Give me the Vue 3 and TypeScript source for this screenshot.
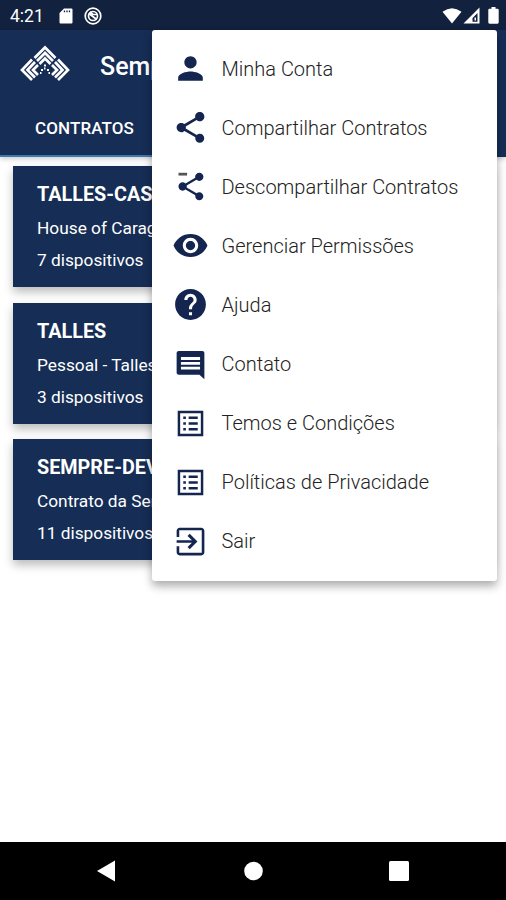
<script setup lang="ts">
interface Contract { name: string; description: string; devices: string }
interface MenuItem { label: string; path: string; kind?: string }

const contracts: Contract[] = [
  { name: 'TALLES-CASA', description: 'House of Caragua', devices: '7 dispositivos' },
  { name: 'TALLES', description: 'Pessoal - Talles', devices: '3 dispositivos' },
  { name: 'SEMPRE-DEV', description: 'Contrato da Sempre', devices: '11 dispositivos' },
]

const share = 'M18 16.08c-.76 0-1.44.3-1.96.77L8.91 12.7c.05-.23.09-.46.09-.7s-.04-.47-.09-.7l7.05-4.11c.54.5 1.25.81 2.04.81 1.66 0 3-1.34 3-3s-1.34-3-3-3-3 1.34-3 3c0 .24.04.47.09.7L8.04 9.81C7.5 9.31 6.79 9 6 9c-1.66 0-3 1.34-3 3s1.34 3 3 3c.79 0 1.5-.31 2.04-.81l7.12 4.16c-.05.21-.08.43-.08.65 0 1.61 1.31 2.92 2.92 2.92s2.92-1.31 2.92-2.92-1.31-2.92-2.92-2.92z'
const list = 'M3.7 3.7h16.6v16.6H3.7zM5.3 5.3v13.4h13.4V5.3zM7.3 7.5H9v1.600H7.3zM7.3 11.2H9v1.600H7.3zM7.300 14.900H9v1.600H7.300zM10.800 7.500h5.900v1.600h-5.900zM10.800 11.200h5.900v1.600h-5.900zM10.800 14.900h5.900v1.600h-5.900z'

const menu: MenuItem[] = [
  { label: 'Minha Conta', path: 'M12 12c2.21 0 4-1.79 4-4s-1.79-4-4-4-4 1.79-4 4 1.79 4 4 4zm0 2c-2.67 0-8 1.34-8 4v2h16v-2c0-2.66-5.33-4-8-4z' },
  { label: 'Compartilhar Contratos', path: share },
  { label: 'Descompartilhar Contratos', path: share, kind: 'unshare' },
  { label: 'Gerenciar Permissões', path: 'M12 4.5C7 4.5 2.73 7.61 1 12c1.73 4.39 6 7.5 11 7.5s9.27-3.11 11-7.5c-1.73-4.39-6-7.5-11-7.5zM12 17c-2.76 0-5-2.24-5-5s2.24-5 5-5 5 2.24 5 5-2.24 5-5 5zm0-8c-1.66 0-3 1.34-3 3s1.34 3 3 3 3-1.34 3-3-1.34-3-3-3z' },
  { label: 'Ajuda', path: 'M12 2C6.48 2 2 6.48 2 12s4.48 10 10 10 10-4.48 10-10S17.52 2 12 2zm1 17h-2v-2h2v2zm2.07-7.75l-.9.92C13.45 12.9 13 13.5 13 15h-2v-.5c0-1.1.45-2.1 1.17-2.83l1.24-1.26c.37-.36.59-.86.59-1.41 0-1.1-.9-2-2-2s-2 .9-2 2H8c0-2.21 1.79-4 4-4s4 1.79 4 4c0 .88-.36 1.68-.93 2.25z' },
  { label: 'Contato', path: 'M21 4.6c0-.9-.6-1.400-1.400-1.400H4.400C3.600 3.200 3 3.700 3 4.600v12.600c0 .9.6 1.400 1.400 1.400h13.400L21 21.500zM18.200 15.300H5.800v-1.900h12.400zM18.200 12.200H5.800v-1.900h12.400zM18.200 9.100H5.800V7.200h12.400z' },
  { label: 'Temos e Condições', path: list },
  { label: 'Políticas de Privacidade', path: list },
  { label: 'Sair', path: 'M10.09 15.59L11.5 17l5-5-5-5-1.41 1.41L12.9 11.2H3v1.600h9.900l-2.810 2.790zM19 3H5c-1.110 0-2 .9-2 2v4h1.700V4.700h14.600v14.600H4.700V15H3v4c0 1.100.890 2 2 2h14c1.100 0 2-.9 2-2V5c0-1.100-.9-2-2-2z' },
]
</script>

<template>
  <div class="screen">
    <div class="status">
      <span class="time">4:21</span>
      <svg class="sd" viewBox="0 0 14 16"><path fill-rule="evenodd" d="M5 .5h7.500Q13.500.5 13.500 1.500v13q0 1-1 1h-11q-1 0-1-1V5zM4.800 2.500v1.700h1.300V2.500zM7.300 2.500v1.700h1.300V2.500zM9.800 2.500v1.700h1.300V2.500z" /></svg>
      <svg class="sync" viewBox="0 0 18 18"><circle cx="9" cy="9" r="7.800" /><circle cx="9" cy="9" r="4.500" /><path d="M4.800 6.500l8 6M6 5l3 2.500h4" /></svg>
      <span class="grow"></span>
      <svg class="wifi" viewBox="0 0 20 16"><path d="M.5 3.800Q10-3.200 19.500 3.800L10 15.500z" /></svg>
      <svg class="signal" viewBox="0 0 17 17"><path fill-rule="evenodd" d="M16.500.5v16H.5zM14.500 6l-5 5v3.800h5z" /><path d="M11.500 10.500h1.500v3h-1.500z" /></svg>
      <svg class="battery" viewBox="0 0 11 17"><path d="M3.500 0h4v1.700h2q1.200 0 1.200 1.200v12.400q0 1.400-1.200 1.400h-8Q.3 16.700.3 15.300V2.900q0-1.200 1.200-1.200h2z" /></svg>
    </div>
    <header class="header">
      <div class="brand">
        <svg class="logo" viewBox="0 0 50 38">
          <path d="M14.500 13L25 2.500 35.500 13M17 16l8-8 8 8M19.500 19l5.500-5.500 5.500 5.500" />
          <path d="M12 14.500L2 25l10 10M15 17l-7.500 8 7.500 7.500M18 20l-5 5 5 5" />
          <path d="M38 14.500L48 25 38 35M35 17l7.500 8-7.500 7.500M32 20l5 5-5 5" />
          <path class="dots" d="M24 20.500h2M21 25h2M27 25h2M24 23.500h1.500M20 28h1.500M28.500 28H30" />
        </svg>
        <h1>Sempre</h1>
      </div>
      <nav class="tabs"><div class="tab active">CONTRATOS</div><div class="tab"></div></nav>
    </header>
    <main class="contracts">
      <article v-for="c in contracts" :key="c.name" class="card">
        <h2>{{ c.name }}</h2>
        <p>{{ c.description }}</p>
        <p>{{ c.devices }}</p>
      </article>
    </main>
    <footer class="navbar">
      <svg viewBox="0 0 20 22"><path d="M19 .5v21L1 11z" /></svg>
      <svg viewBox="0 0 20 22"><circle cx="10.500" cy="11" r="9.300" /></svg>
      <svg viewBox="0 0 20 22"><rect x="0" y="1" width="20" height="20" rx="1.500" /></svg>
    </footer>
    <div class="menu">
      <div v-for="m in menu" :key="m.label" class="item">
        <svg v-if="m.kind === 'unshare'" class="icon" viewBox="0 0 24 24">
          <path transform="translate(1.500 1.200) scale(.9)" :d="m.path" />
          <path class="minus" d="M4.200 3.100h5.600v1.800H4.200z" />
        </svg>
        <svg v-else class="icon" viewBox="0 0 24 24"><path fill-rule="evenodd" :d="m.path" /></svg>
        <span>{{ m.label }}</span>
      </div>
    </div>
  </div>
</template>

<style>
body { margin: 0; overflow: hidden; }
</style>
<style scoped>
.screen { position: relative; width: 506px; height: 900px; display: flex; flex-direction: column; overflow: hidden; background: #fff; font-family: Roboto, sans-serif; color: #fff; }
.status { height: 30px; box-sizing: border-box; padding: 1px 7px 0 10px; display: flex; align-items: center; background: #12213e; }
.status svg, .navbar svg { fill: #fff; }
.time { width: 49px; font-size: 17.500px; }
.sd { width: 14px; height: 16px; }
.status .sync { width: 18px; height: 18px; margin-left: 11px; fill: none; stroke: #fff; stroke-width: 1.700; }
.grow { flex: 1; }
.wifi { width: 20px; height: 16px; }
.signal { width: 17px; height: 17px; margin-left: 1px; }
.battery { width: 11px; height: 17px; margin-left: 8px; }
.header { height: 127px; display: flex; flex-direction: column; background: #162d55; box-shadow: 0 2px 5px #0003; z-index: 1; }
.brand { height: 72px; display: flex; align-items: center; padding-left: 20px; gap: 30px; }
.logo { width: 50px; height: 38px; margin-top: -4px; fill: none; stroke: #fff; stroke-width: 2.700; }
.logo .dots { stroke-width: 1.800; }
h1 { margin: 0; font-size: 25px; font-weight: 500; }
.tabs { flex: 1; display: flex; }
.tab { flex: 1; box-sizing: border-box; padding: 16px 0 0 35px; font-size: 17px; line-height: 20px; font-weight: 500; letter-spacing: .1px; }
.tab.active { border-bottom: 2px solid #3e78b0; }
.contracts { flex: 1; padding: 9px 13px; display: flex; flex-direction: column; gap: 15.500px; }
.card { height: 121px; box-sizing: border-box; padding: 16px 24px; background: #162d55; box-shadow: 0 5px 9px #0004; }
.card h2 { margin: 0; font-size: 19.800px; line-height: 25px; font-weight: 700; }
.card p { margin: 0; font-size: 17.300px; line-height: 32px; }
.card h2 + p { margin-top: 5px; }
.navbar { height: 58px; box-sizing: border-box; padding: 0 97px 1px 96px; display: flex; justify-content: space-between; align-items: center; background: #000; }
.navbar svg { width: 20px; height: 22px; }
.menu { position: absolute; z-index: 2; left: 152px; top: 30px; width: 345px; height: 551px; box-sizing: border-box; padding-top: 9px; background: #fff; border-radius: 3px; box-shadow: 0 5px 10px #0005; color: #222; }
.item { height: 59.100px; display: flex; align-items: center; padding-left: 20px; font-size: 20px; font-weight: 300; white-space: nowrap; }
.icon { width: 37px; height: 37px; margin-right: 12.500px; fill: #14264f; }
.minus { fill: #555; }
</style>
